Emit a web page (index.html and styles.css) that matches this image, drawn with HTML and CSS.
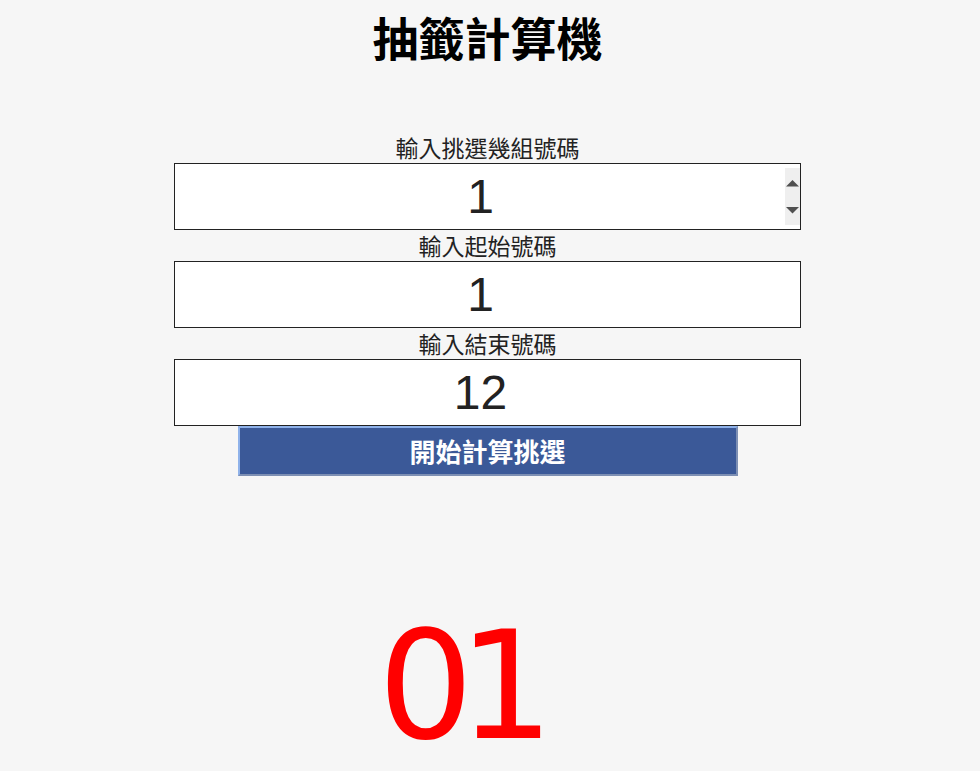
FILE: index.html
```html
<!DOCTYPE html>
<html lang="zh-Hant">
<head>
<meta charset="utf-8">
<title>抽籤計算機</title>
<link rel="stylesheet" href="styles.css">
</head>
<body>
<main class="page">
  <h1 class="title">抽籤計算機</h1>
  <form class="form">
    <label class="field-label" for="groups">輸入挑選幾組號碼</label>
    <div class="field">
      <input class="num-input" id="groups" type="text" value="1">
      <span class="spinner" aria-hidden="true">
        <svg width="15" height="57" viewBox="0 0 15 57">
          <polygon points="1,18.5 14,18.5 7.5,12" fill="#505050"/>
          <polygon points="1,39 14,39 7.5,45.5" fill="#505050"/>
        </svg>
      </span>
    </div>
    <label class="field-label" for="start">輸入起始號碼</label>
    <div class="field">
      <input class="num-input" id="start" type="text" value="1">
    </div>
    <label class="field-label" for="end">輸入結束號碼</label>
    <div class="field">
      <input class="num-input" id="end" type="text" value="12">
    </div>
    <button class="btn" type="button">開始計算挑選</button>
  </form>
  <div class="result">01</div>
</main>
</body>
</html>
```
FILE: styles.css
```css
html, body {
  margin: 0;
  padding: 0;
  background: #f6f6f6;
}

.page {
  width: 975px;
  display: flex;
  flex-direction: column;
  align-items: center;
  font-family: "Noto Sans CJK TC", "Noto Sans", sans-serif;
  color: #111;
}

.title {
  margin: 13px 0 72px;
  font-size: 46px;
  line-height: 47px;
  font-weight: 700;
  color: #000;
}

.form {
  display: flex;
  flex-direction: column;
  align-items: center;
}

.field-label {
  display: block;
  font-size: 23px;
  line-height: 31px;
  height: 31px;
  font-weight: 400;
  color: #222;
}

.field {
  position: relative;
  width: 627px;
  height: 67px;
}

.num-input {
  box-sizing: border-box;
  width: 627px;
  height: 67px;
  margin: 0;
  padding: 0 16px 0 2px;
  border: 1px solid #222;
  border-radius: 0;
  background: #fff;
  font-family: "Liberation Sans", Arial, sans-serif;
  font-size: 48px;
  color: #222;
  text-align: center;
  outline: none;
}

.spinner {
  position: absolute;
  right: 1px;
  top: 5px;
  width: 15px;
  height: 57px;
  background: #efefef;
  display: block;
}

.spinner svg {
  display: block;
}

.btn {
  box-sizing: border-box;
  width: 500px;
  height: 50px;
  margin: 0;
  padding: 0;
  background: #3b5998;
  border: 2px solid;
  border-color: #8fb2ea #7d8fb3 #7d8fb3 #8fb2ea;
  color: #fff;
  font-family: "Noto Sans CJK TC", "Noto Sans", sans-serif;
  font-size: 26px;
  line-height: 46px;
  font-weight: 700;
  cursor: pointer;
}

.result {
  margin-top: 135px;
  padding-right: 58px;
  font-family: "DejaVu Sans", sans-serif;
  font-size: 150px;
  line-height: 150px;
  letter-spacing: -15px;
  color: #ff0000;
}
```
